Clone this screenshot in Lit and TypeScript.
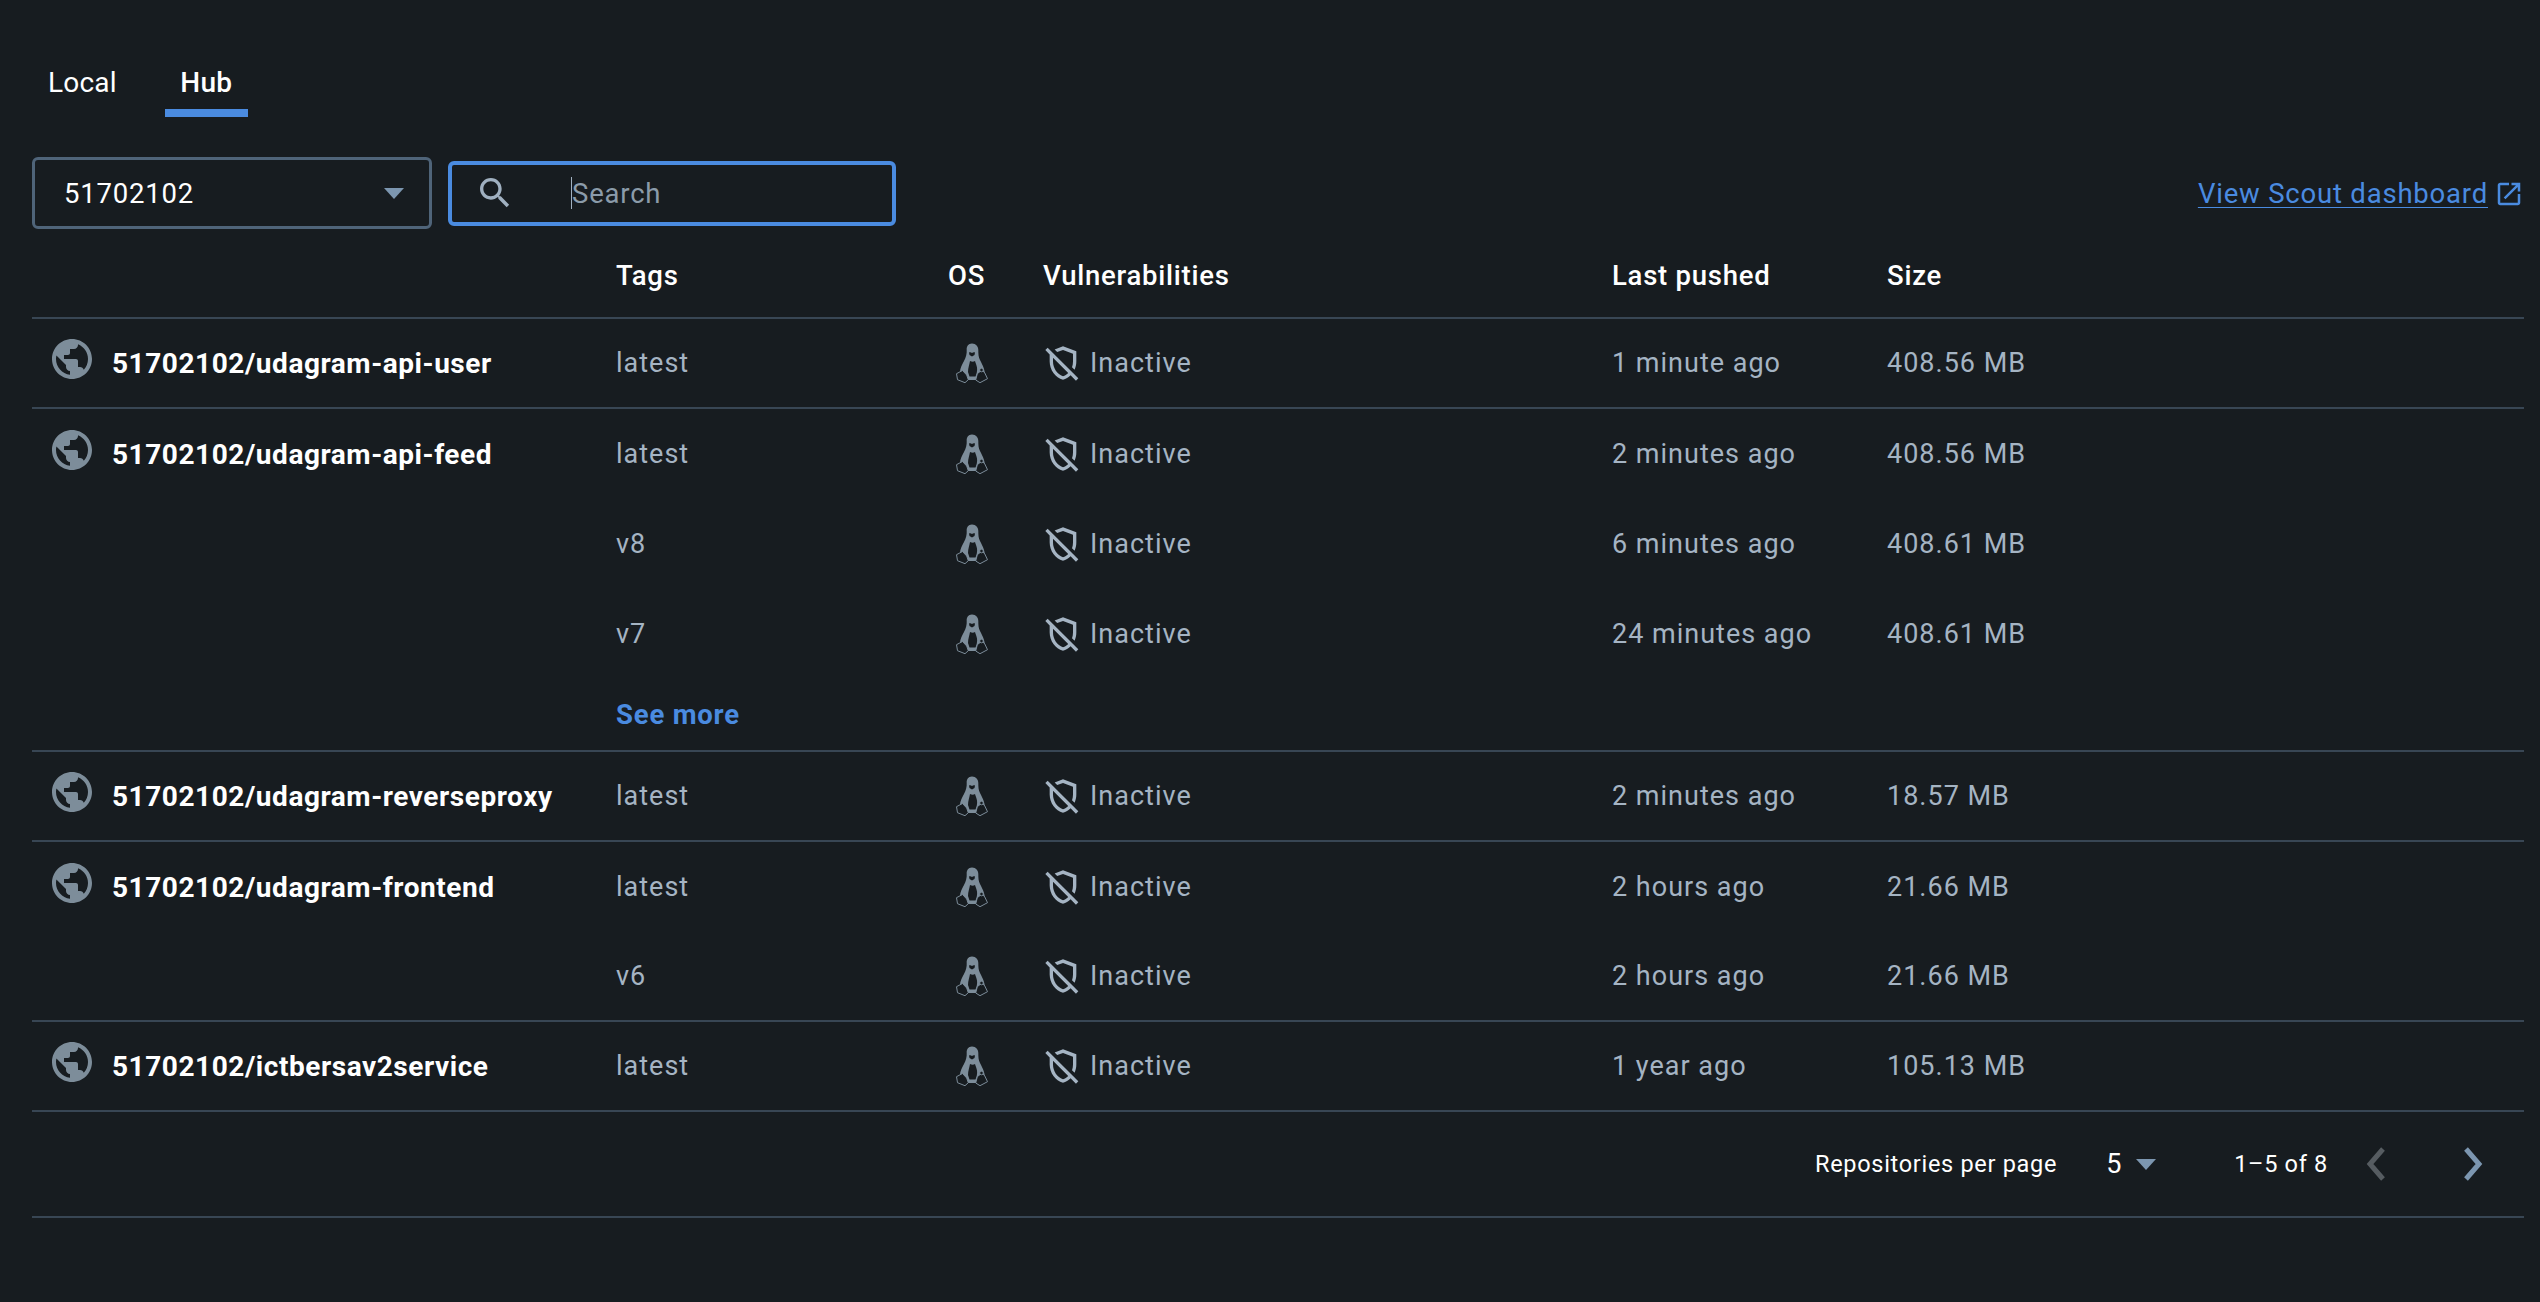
import { LitElement, css, html, svg, type TemplateResult } from "lit";
import { customElement } from "lit/decorators.js";

interface Tag {
  tag: string;
  pushed: string;
  size: string;
}

interface Repo {
  name: string;
  tags: Tag[];
  more?: boolean;
}

const REPOS: Repo[] = [
  {
    name: "51702102/udagram-api-user",
    tags: [{ tag: "latest", pushed: "1 minute ago", size: "408.56 MB" }],
  },
  {
    name: "51702102/udagram-api-feed",
    tags: [
      { tag: "latest", pushed: "2 minutes ago", size: "408.56 MB" },
      { tag: "v8", pushed: "6 minutes ago", size: "408.61 MB" },
      { tag: "v7", pushed: "24 minutes ago", size: "408.61 MB" },
    ],
    more: true,
  },
  {
    name: "51702102/udagram-reverseproxy",
    tags: [{ tag: "latest", pushed: "2 minutes ago", size: "18.57 MB" }],
  },
  {
    name: "51702102/udagram-frontend",
    tags: [
      { tag: "latest", pushed: "2 hours ago", size: "21.66 MB" },
      { tag: "v6", pushed: "2 hours ago", size: "21.66 MB" },
    ],
  },
  {
    name: "51702102/ictbersav2service",
    tags: [{ tag: "latest", pushed: "1 year ago", size: "105.13 MB" }],
  },
];

function icon(d: string, size: number, cls = ""): TemplateResult {
  return html`<svg class=${cls} width=${size} height=${size} viewBox="0 0 24 24" fill="currentColor">
    ${svg`<path d=${d}></path>`}
  </svg>`;
}

const GLOBE =
  "M12 2C6.48 2 2 6.48 2 12s4.48 10 10 10 10-4.48 10-10S17.52 2 12 2zm-1 17.93c-3.95-.49-7-3.85-7-7.93 0-.62.08-1.21.21-1.79L9 15v1c0 1.1.9 2 2 2v1.93zm6.9-2.54c-.26-.81-1-1.39-1.9-1.39h-1v-3c0-.55-.45-1-1-1H8v-2h2c.55 0 1-.45 1-1V7h2c1.1 0 2-.9 2-2v-.41c2.93 1.19 5 4.06 5 7.41 0 2.08-.8 3.97-2.1 5.39z";
const SHIELD_OFF =
  "M12 4.14l6 2.25v4.7c0 1.19-.22 2.36-.6 3.46l1.53 1.53c.67-1.53 1.07-3.2 1.07-4.99V5l-8-3-5.02 1.88 1.55 1.55L12 4.14zM2.81 2.81 1.39 4.22 4 6.83v4.26c0 5.05 3.41 9.76 8 10.91 1.72-.43 3.28-1.36 4.55-2.62l3.23 3.23 1.41-1.41L2.81 2.81zM12 19.92c-3.45-1.13-6-4.82-6-8.83V8.83l9.14 9.14c-.9.89-1.97 1.59-3.14 1.95z";
const SEARCH =
  "M15.5 14h-.79l-.28-.27C15.41 12.59 16 11.11 16 9.5 16 5.91 13.09 3 9.5 3S3 5.91 3 9.5 5.91 16 9.5 16c1.61 0 3.09-.59 4.23-1.57l.27.28v.79l5 4.99L20.49 19l-4.99-5zm-6 0C7.01 14 5 11.99 5 9.5S7.01 5 9.5 5 14 7.01 14 9.5 11.99 14 9.5 14z";
const OPEN_NEW =
  "M19 19H5V5h7V3H5c-1.11 0-2 .9-2 2v14c0 1.1.89 2 2 2h14c1.1 0 2-.9 2-2v-7h-2v7zM14 3v2h3.59l-9.83 9.83 1.41 1.41L19 6.41V10h2V3h-7z";

// tux, drawn on the 32x40 box the reference uses
const penguin = html`<svg class="tux" width="32" height="40" viewBox="0 0 32 40">
  <path
    d="M16 .5C12 .5 10.500 3.500 10.700 7 10.900 11 10 14 8 18 6 22 4 25 4 29l5 3 3 5h8l3-6 6 1c0-6-3-11-5-15-1.500-3-1.700-6-1.700-10 0-3.500-2.300-6.500-6.300-6.500z"
    fill="#7d8d9a"
  ></path>
  <path
    d="M14 18c-.5 3-2 7-2 11l1.500 4.500h6c1-2.500 2-5.500 1.500-9-.4-2.500-1.500-4.500-2-6.500-1.500 1-3 1-5 0z"
    fill="#171c20"
  ></path>
  <path d="M13 9.500c1-.5 2-.3 3 .5 1-.8 2-1 3-.5l-.5 2.500-2.500 1.500-2.500-1.500z" fill="#171c20"></path>
  <path
    d="M6.500 27.500.5 30.700l1 6L9 39.700l3.300-3-1.600-4.700zM26 27l2.800 3 2.700 5.700-7.500 4-4.300-2.700 1.600-6.300z"
    fill="#171c20"
    stroke="#7d8d9a"
    stroke-width="1"
  ></path>
  <path d="M12 35.500h8" fill="none" stroke="#7d8d9a" stroke-width="2"></path>
  <circle cx="25.500" cy="27" r="1.800" fill="#171c20" stroke="#7d8d9a" stroke-width="1"></circle>
</svg>`;

@customElement("app-root")
export class AppRoot extends LitElement {
  render(): TemplateResult {
    return html`
      <div class="page">
        <nav class="tabs">
          <div class="tab">Local</div>
          <div class="tab active">Hub</div>
        </nav>

        <div class="toolbar">
          <div class="select">
            <span>51702102</span>
            <span class="caret"></span>
          </div>
          <div class="search">
            ${icon(SEARCH, 40, "search-icon")}
            <span class="cursor"></span>
            <span class="placeholder">Search</span>
          </div>
          <a class="scout">
            <span class="scout-text">View Scout dashboard</span>
            ${icon(OPEN_NEW, 30, "open-new")}
          </a>
        </div>

        <div class="row head">
          <div></div>
          <div>Tags</div>
          <div>OS</div>
          <div>Vulnerabilities</div>
          <div>Last pushed</div>
          <div>Size</div>
        </div>

        ${REPOS.map((repo) => this.renderRepo(repo))}

        <div class="pager">
          <span class="per-page">Repositories per page</span>
          <span class="count">5</span>
          <span class="caret small"></span>
          <span class="range">1–5 of 8</span>
          <svg class="chev" width="20" height="34" viewBox="0 0 20 34">
            <path d="M17 2 4 17l13 15" fill="none" stroke="#565c61" stroke-width="5"></path>
          </svg>
          <svg class="chev next" width="20" height="34" viewBox="0 0 20 34">
            <path d="M3 2l13 15L3 32" fill="none" stroke="#7c96b0" stroke-width="5"></path>
          </svg>
        </div>
      </div>
    `;
  }

  private renderRepo(repo: Repo): TemplateResult {
    return html`
      <section class="repo">
        ${repo.tags.map(
          (t, i) => html`
            <div class="row">
              <div class="name">
                ${i === 0 ? html`${icon(GLOBE, 48, "globe")}<span>${repo.name}</span>` : ""}
              </div>
              <div>${t.tag}</div>
              <div class="os">${penguin}</div>
              <div class="vuln">${icon(SHIELD_OFF, 40)}<span>Inactive</span></div>
              <div>${t.pushed}</div>
              <div>${t.size}</div>
            </div>
          `
        )}
        ${repo.more ? html`<div class="row more"><div></div><div class="see-more">See more</div></div>` : ""}
      </section>
    `;
  }

  static styles = css`
    :host {
      display: block;
      min-height: 1302px;
      background: #171c20;
      color: #fff;
      font-family: Roboto, sans-serif;
    }

    .page {
      padding: 0 16px 0 32px;
    }

    .tabs {
      display: flex;
      padding-top: 60px;
      height: 57px;
    }

    .tab {
      padding: 0 48px 0 16px;
      height: 57px;
      font-size: 28px;
      letter-spacing: 0.2px;
      line-height: 46px;
      box-sizing: border-box;
    }

    .tab.active {
      font-weight: 500;
      width: 83px;
      padding: 0;
      text-align: center;
      border-bottom: 8px solid #4a8be0;
    }

    .toolbar {
      display: flex;
      align-items: center;
      height: 72px;
      margin-top: 40px;
      gap: 16px;
    }

    .select {
      display: flex;
      align-items: center;
      justify-content: space-between;
      box-sizing: border-box;
      width: 400px;
      height: 72px;
      padding: 0 25px 0 29px;
      border: 3px solid #4f6479;
      border-radius: 6px;
      font-size: 27.500px;
      letter-spacing: 0.8px;
    }

    .caret {
      width: 0;
      height: 0;
      border-left: 10px solid transparent;
      border-right: 10px solid transparent;
      border-top: 11px solid #7c96b0;
    }

    .search {
      display: flex;
      align-items: center;
      box-sizing: border-box;
      width: 448px;
      height: 65px;
      padding-left: 23px;
      border: 4px solid #4a8be0;
      border-radius: 6px;
      color: #a0b0c0;
    }

    .search-icon {
      flex: none;
    }

    .cursor {
      width: 1px;
      height: 32px;
      margin-left: 56px;
      background: #a0b0c0;
    }

    .placeholder {
      font-size: 27.500px;
      letter-spacing: 0.8px;
      color: #8b9baa;
    }

    .scout {
      display: flex;
      align-items: center;
      gap: 6px;
      margin-left: auto;
      color: #4a8be0;
      font-size: 27.500px;
      letter-spacing: 0.8px;
    }

    .scout-text {
      text-decoration: underline;
      text-underline-offset: 4px;
      text-decoration-thickness: 1px;
    }

    .open-new {
      margin-top: 2px;
    }

    .row {
      display: grid;
      grid-template-columns: 584px 332px 95px 569px 275px 1fr;
      align-items: center;
      height: 90px;
      font-size: 27px;
      letter-spacing: 1px;
      color: #a5b4c3;
    }

    .row.head {
      height: 84px;
      margin-top: 4px;
      color: #fff;
      font-weight: 500;
      font-size: 27.500px;
      letter-spacing: 0.75px;
      border-bottom: 2px solid #384654;
    }

    .repo {
      border-bottom: 2px solid #384654;
    }

    .repo .row:last-child {
      height: 88px;
    }

    .repo .row.more:last-child {
      height: 71px;
    }

    .see-more {
      color: #4a8be0;
      font-weight: 700;
      font-size: 27.500px;
      letter-spacing: 0.8px;
    }

    .name {
      display: flex;
      align-items: center;
      gap: 16px;
      color: #fff;
      font-weight: 700;
      font-size: 28px;
      letter-spacing: 0.55px;
    }

    .globe {
      margin-left: 16px;
      flex: none;
      color: #7d8d9a;
      position: relative;
      top: -4px;
    }

    .os {
      display: flex;
      padding-left: 8px;
    }

    .vuln {
      display: flex;
      align-items: center;
      gap: 7px;
    }

    .pager {
      display: flex;
      align-items: center;
      height: 104px;
      border-bottom: 2px solid #384654;
      padding-left: 1783px;
      font-size: 23.500px;
      letter-spacing: 0.7px;
    }

    .count {
      margin-left: 49px;
      font-size: 27px;
      width: 30px;
    }

    .range {
      margin-left: 78px;
      margin-right: 38px;
    }

    .next {
      margin-left: 77px;
    }
  `;
}

declare global {
  interface HTMLElementTagNameMap {
    "app-root": AppRoot;
  }
}
